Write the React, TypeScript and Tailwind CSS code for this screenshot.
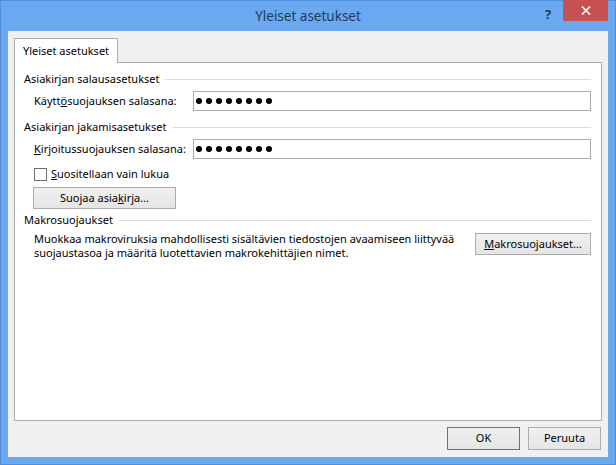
import React from 'react'

const font = { fontFamily: '"Noto Sans", "Open Sans", sans-serif' }

function Group({ title }: { title: string }) {
  return (
    <div className="flex h-[16px] items-center gap-[6px] whitespace-nowrap pl-[9px] pr-[10px]">
      <span>{title}</span>
      <div className="h-px flex-1 bg-[#dcdcdc]" />
    </div>
  )
}

function Dots() {
  return (
    <div className="flex gap-[4px] pl-[2px]">
      {Array.from({ length: 8 }).map((_, i) => (
        <span key={i} className="h-[6px] w-[6px] rounded-full bg-black" />
      ))}
    </div>
  )
}

function PasswordRow({ label }: { label: React.ReactNode }) {
  return (
    <div className="mt-[4px] flex items-center whitespace-nowrap pl-[19px] pr-[10px]">
      <span className="w-[159px]">{label}</span>
      <div className="flex h-[20px] flex-1 items-center border border-[#acacac] bg-white">
        <Dots />
      </div>
    </div>
  )
}

function Button({ children, className = '' }: { children: React.ReactNode; className?: string }) {
  return (
    <div
      className={`flex items-center justify-center whitespace-nowrap border border-[#acacac] bg-gradient-to-b from-[#f0f0f0] to-[#e5e5e5] ${className}`}
    >
      {children}
    </div>
  )
}

export default function App() {
  return (
    <div className="h-[465px] w-[616px] border border-[#4f8fdb] bg-[#6aa9f0] text-[11px] text-black" style={font}>
      <div className="relative flex h-[30px] items-center justify-center">
        <span className="text-[13.5px] text-[#1e395b]">Yleiset asetukset</span>
        <span className="absolute left-[544px] top-[4px] text-[13px] font-bold text-[#1e395b]">?</span>
        <div className="absolute right-[7px] top-[-1px] flex h-[21px] w-[45px] items-center justify-center bg-[#c75050]">
          <svg width="10" height="9" viewBox="0 0 10 9">
            <path d="M1 0.5 L9 8.5 M9 0.5 L1 8.5" stroke="white" strokeWidth="1.6" />
          </svg>
        </div>
      </div>
      <div className="mx-[7px] flex h-[426px] flex-col bg-[#f0f0f0] px-[6px] pt-[7px]">
        <div className="flex">
          <div className="relative -mb-px flex h-[25px] w-[104px] items-center justify-center border border-b-0 border-[#acacac] bg-white">
            Yleiset asetukset
          </div>
        </div>
        <div className="flex h-[359px] flex-col border border-[#acacac] bg-white pt-[8px]">
          <Group title="Asiakirjan salausasetukset" />
          <PasswordRow
            label={
              <>
                Käytt<span className="underline">ö</span>suojauksen salasana:
              </>
            }
          />
          <div className="mt-[8px]">
            <Group title="Asiakirjan jakamisasetukset" />
          </div>
          <PasswordRow
            label={
              <>
                <span className="underline">K</span>irjoitussuojauksen salasana:
              </>
            }
          />
          <div className="mt-[9px] flex h-[13px] items-center gap-[4px] pl-[19px]">
            <span className="h-[13px] w-[13px] border border-[#707070] bg-white" />
            <span>
              <span className="underline">S</span>uositellaan vain lukua
            </span>
          </div>
          <Button className="ml-[18px] mt-[6px] h-[22px] w-[143px]">
            <span>
              Suojaa asia<span className="underline">k</span>irja...
            </span>
          </Button>
          <div className="mt-[3px]">
            <Group title="Makrosuojaukset" />
          </div>
          <div className="mt-[5px] flex items-start justify-between pl-[19px] pr-[10px]">
            <p className="-mt-px whitespace-nowrap leading-[14px]">
              Muokkaa makroviruksia mahdollisesti sisältävien tiedostojen avaamiseen liittyvää
              <br />
              suojaustasoa ja määritä luotettavien makrokehittäjien nimet.
            </p>
            <Button className="h-[22px] w-[116px]">
              <span>
                <span className="underline">M</span>akrosuojaukset...
              </span>
            </Button>
          </div>
        </div>
        <div className="flex justify-end gap-[8px] pr-[1px] pt-[6px]">
          <Button className="h-[23px] w-[73px] !border-[#3c7fb1]">OK</Button>
          <Button className="h-[23px] w-[73px]">Peruuta</Button>
        </div>
      </div>
    </div>
  )
}
